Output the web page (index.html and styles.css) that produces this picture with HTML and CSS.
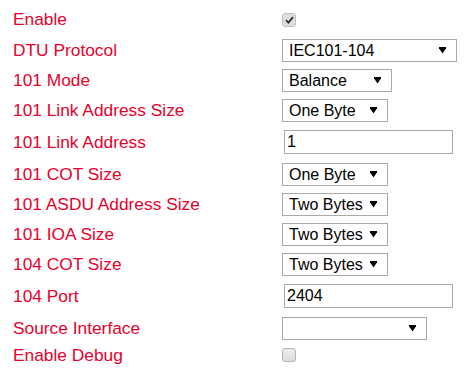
FILE: index.html
```html
<!DOCTYPE html>
<html lang="en">
<head>
    <meta charset="UTF-8">
    <meta name="viewport" content="width=device-width, initial-scale=1.0">
    <title>DTU Settings</title>
    <link rel="stylesheet" href="styles.css">
</head>
<body>
    <form class="settings">
        <div class="row first">
            <span class="label">Enable</span>
            <span class="check checked">
                <svg width="9" height="8" viewBox="0 0 9 8"><path d="M1 4.2 L3.4 6.6 L8 1.2" fill="none" stroke="#333" stroke-width="1.8"/></svg>
            </span>
        </div>
        <div class="row">
            <span class="label">DTU Protocol</span>
            <span class="select w-protocol"><select><option>IEC101-104</option></select></span>
        </div>
        <div class="row">
            <span class="label">101 Mode</span>
            <span class="select w-mode"><select><option>Balance</option></select></span>
        </div>
        <div class="row">
            <span class="label">101 Link Address Size</span>
            <span class="select w-size"><select><option>One Byte</option></select></span>
        </div>
        <div class="row tall">
            <span class="label">101 Link Address</span>
            <input class="text" type="text" value="1">
        </div>
        <div class="row">
            <span class="label">101 COT Size</span>
            <span class="select w-size"><select><option>One Byte</option></select></span>
        </div>
        <div class="row">
            <span class="label">101 ASDU Address Size</span>
            <span class="select w-size"><select><option>Two Bytes</option></select></span>
        </div>
        <div class="row">
            <span class="label">101 IOA Size</span>
            <span class="select w-size"><select><option>Two Bytes</option></select></span>
        </div>
        <div class="row">
            <span class="label">104 COT Size</span>
            <span class="select w-size"><select><option>Two Bytes</option></select></span>
        </div>
        <div class="row tall">
            <span class="label">104 Port</span>
            <input class="text" type="text" value="2404">
        </div>
        <div class="row">
            <span class="label">Source Interface</span>
            <span class="select w-source"><select><option></option></select></span>
        </div>
        <div class="row last">
            <span class="label">Enable Debug</span>
            <span class="check"></span>
        </div>
    </form>
</body>
</html>
```

FILE: styles.css
```css
body {
    margin: 0;
    padding: 4px 0 0 13px;
    background-color: white;
    font-family: Arial, "Liberation Sans", sans-serif;
}
.row {
    display: flex;
    align-items: center;
    height: 30px;
}
.row.first {
    height: 31px;
}
.row.tall {
    height: 34px;
}
.row.last {
    height: 24px;
}
.label {
    width: 269px;
    color: #e8002d;
    font-size: 17.33px;
}
.select {
    position: relative;
    display: inline-block;
}
.select select {
    -webkit-appearance: none;
    appearance: none;
    width: 100%;
    height: 23px;
    margin: 0;
    padding: 0 0 0 6px;
    border: 1px solid #a9a9a9;
    border-radius: 0;
    background-color: white;
    color: black;
    font-family: Arial, "Liberation Sans", sans-serif;
    font-size: 16px;
}
.select::after {
    content: "";
    position: absolute;
    right: 11px;
    top: 8px;
    width: 7px;
    height: 7px;
    background-color: black;
    clip-path: polygon(0 0, 100% 0, 100% 25%, 50% 100%, 0 25%);
}
.w-protocol { width: 175px; }
.w-mode { width: 110px; }
.w-size { width: 106px; }
.w-source { width: 145px; }
.text {
    box-sizing: border-box;
    width: 169px;
    height: 24px;
    margin: 0 0 0 2px;
    padding: 0 2px;
    border: 1px solid #a9a9a9;
    font-family: Arial, "Liberation Sans", sans-serif;
    font-size: 16px;
    color: black;
}
.check {
    box-sizing: border-box;
    display: inline-flex;
    align-items: center;
    justify-content: center;
    width: 14px;
    height: 14px;
    border: 1px solid #b4b4b4;
    border-radius: 3px;
    background: linear-gradient(#ededed, #dcdcdc);
}
.check.checked {
    background: #dedede;
    border-color: #c2c2c2;
}
```
